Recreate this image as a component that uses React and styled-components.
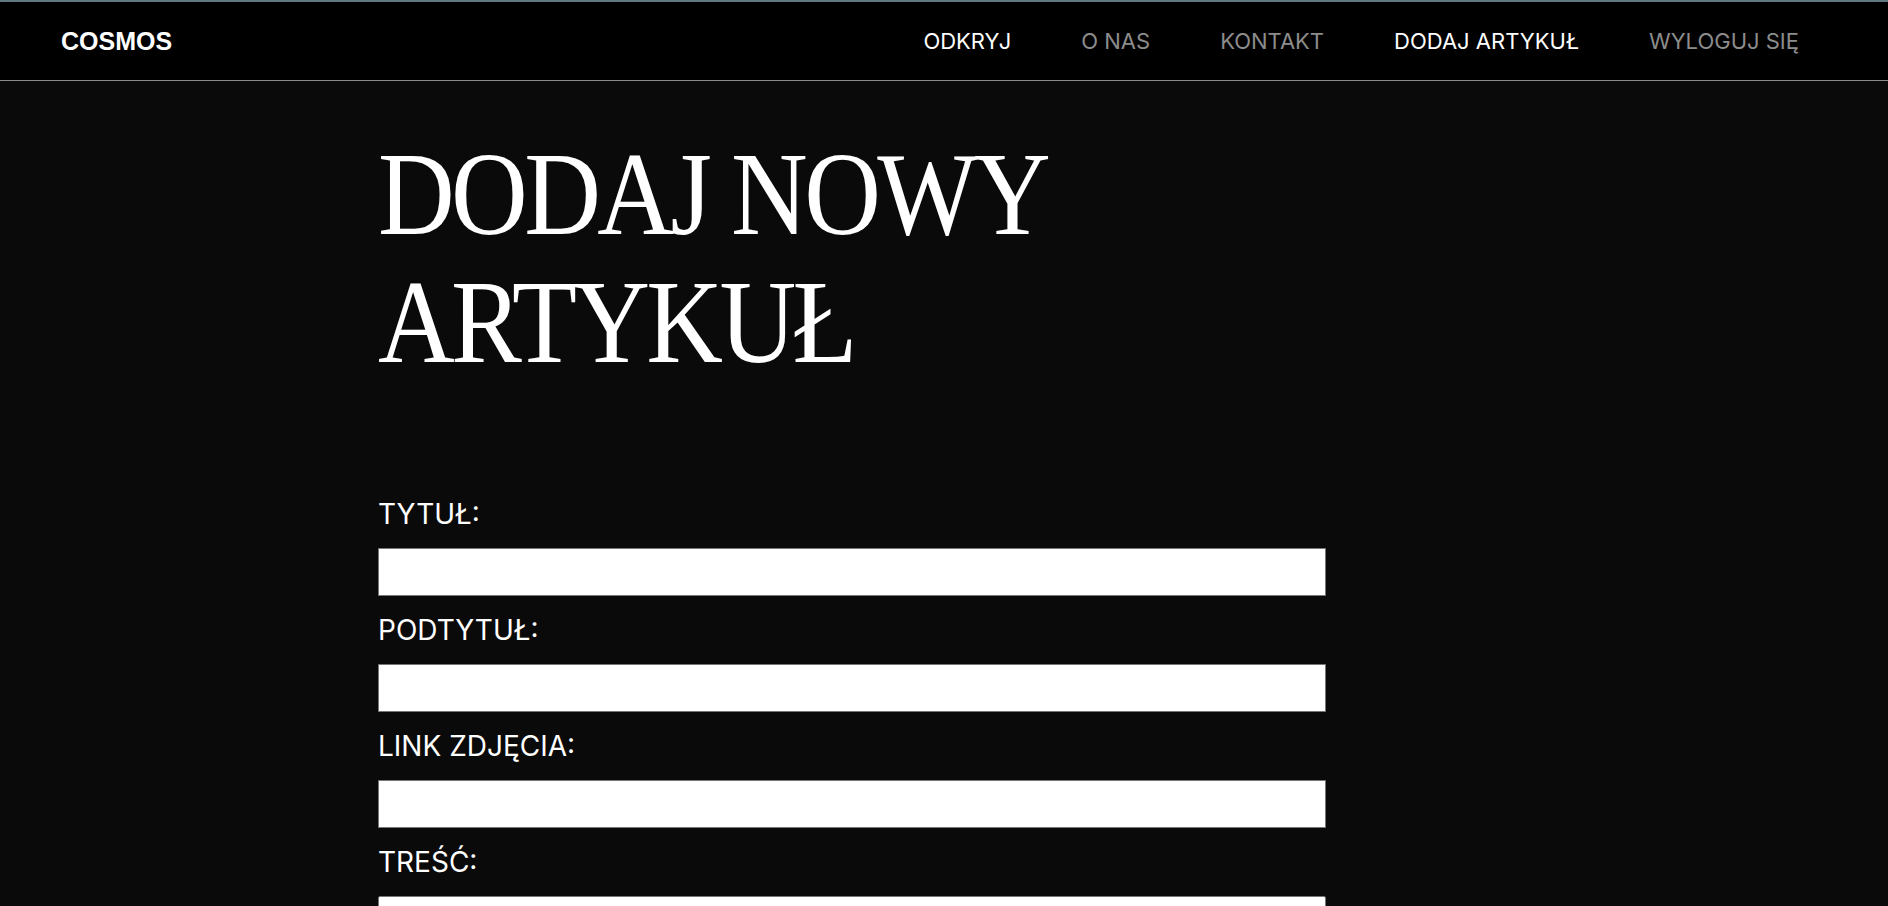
import React from 'react'
import styled, { createGlobalStyle } from 'styled-components'

const GlobalStyle = createGlobalStyle`
  * {
    box-sizing: border-box;
  }

  body {
    margin: 0;
    background: #0a0a0a;
    color: #ffffff;
    font-family: Inter, 'Liberation Sans', sans-serif;
  }
`

const Nav = styled.nav`
  display: flex;
  align-items: center;
  justify-content: space-between;
  height: 81px;
  padding: 0 89px 0 61px;
  background: #000000;
  border-top: 2px solid #5e7a80;
  border-bottom: 1px solid #8c8c8c;
`

const Logo = styled.a`
  font-family: 'Liberation Sans', Arial, sans-serif;
  font-weight: 700;
  font-size: 25px;
  color: #ffffff;
  text-decoration: none;
`

const Links = styled.ul`
  display: flex;
  gap: 70px;
  margin: 0;
  padding: 0;
  list-style: none;
`

const Link = styled.a`
  font-family: Inter, sans-serif;
  font-size: 22px;
  color: ${props => (props.active ? '#ffffff' : '#8c8c8c')};
  text-decoration: none;
  text-transform: uppercase;
`

const Main = styled.main`
  padding: 50px 0 0 378px;
`

const Title = styled.h1`
  margin: 0 0 112px;
  font-family: 'Liberation Serif', 'DejaVu Serif', serif;
  font-weight: 400;
  font-size: 118px;
  line-height: 128px;
  letter-spacing: -4px;
  color: #ffffff;
  transform: scaleX(0.9);
  transform-origin: left top;
`

const Form = styled.form`
  display: flex;
  flex-direction: column;
  width: 948px;
`

const Label = styled.label`
  font-family: Inter, sans-serif;
  font-size: 28px;
  line-height: 31px;
  margin-bottom: 18px;
  color: #ffffff;
`

const Input = styled.input`
  height: 48px;
  margin: 0 0 19px;
  border: 1px solid #767676;
  background: #ffffff;
  font-size: 18px;
  padding: 0 10px;
`

const TextArea = styled.textarea`
  height: 240px;
  margin: 0;
  border: 1px solid #767676;
  border-radius: 2px;
  background: #ffffff;
  resize: vertical;
`

const links = [
  { label: 'Odkryj', active: true },
  { label: 'O nas' },
  { label: 'Kontakt' },
  { label: 'Dodaj artykuł', active: true },
  { label: 'Wyloguj się' },
]

const fields = ['TYTUŁ:', 'PODTYTUŁ:', 'LINK ZDJĘCIA:']

const App = () => (
  <>
    <GlobalStyle />
    <Nav>
      <Logo href="#">COSMOS</Logo>
      <Links>
        {links.map(l => (
          <li key={l.label}>
            <Link href="#" active={l.active ? 1 : 0}>
              {l.label}
            </Link>
          </li>
        ))}
      </Links>
    </Nav>
    <Main>
      <Title>
        DODAJ NOWY
        <br />
        ARTYKUŁ
      </Title>
      <Form onSubmit={e => e.preventDefault()}>
        {fields.map(f => (
          <React.Fragment key={f}>
            <Label>{f}</Label>
            <Input type="text" />
          </React.Fragment>
        ))}
        <Label>TREŚĆ:</Label>
        <TextArea />
      </Form>
    </Main>
  </>
)

export default App
